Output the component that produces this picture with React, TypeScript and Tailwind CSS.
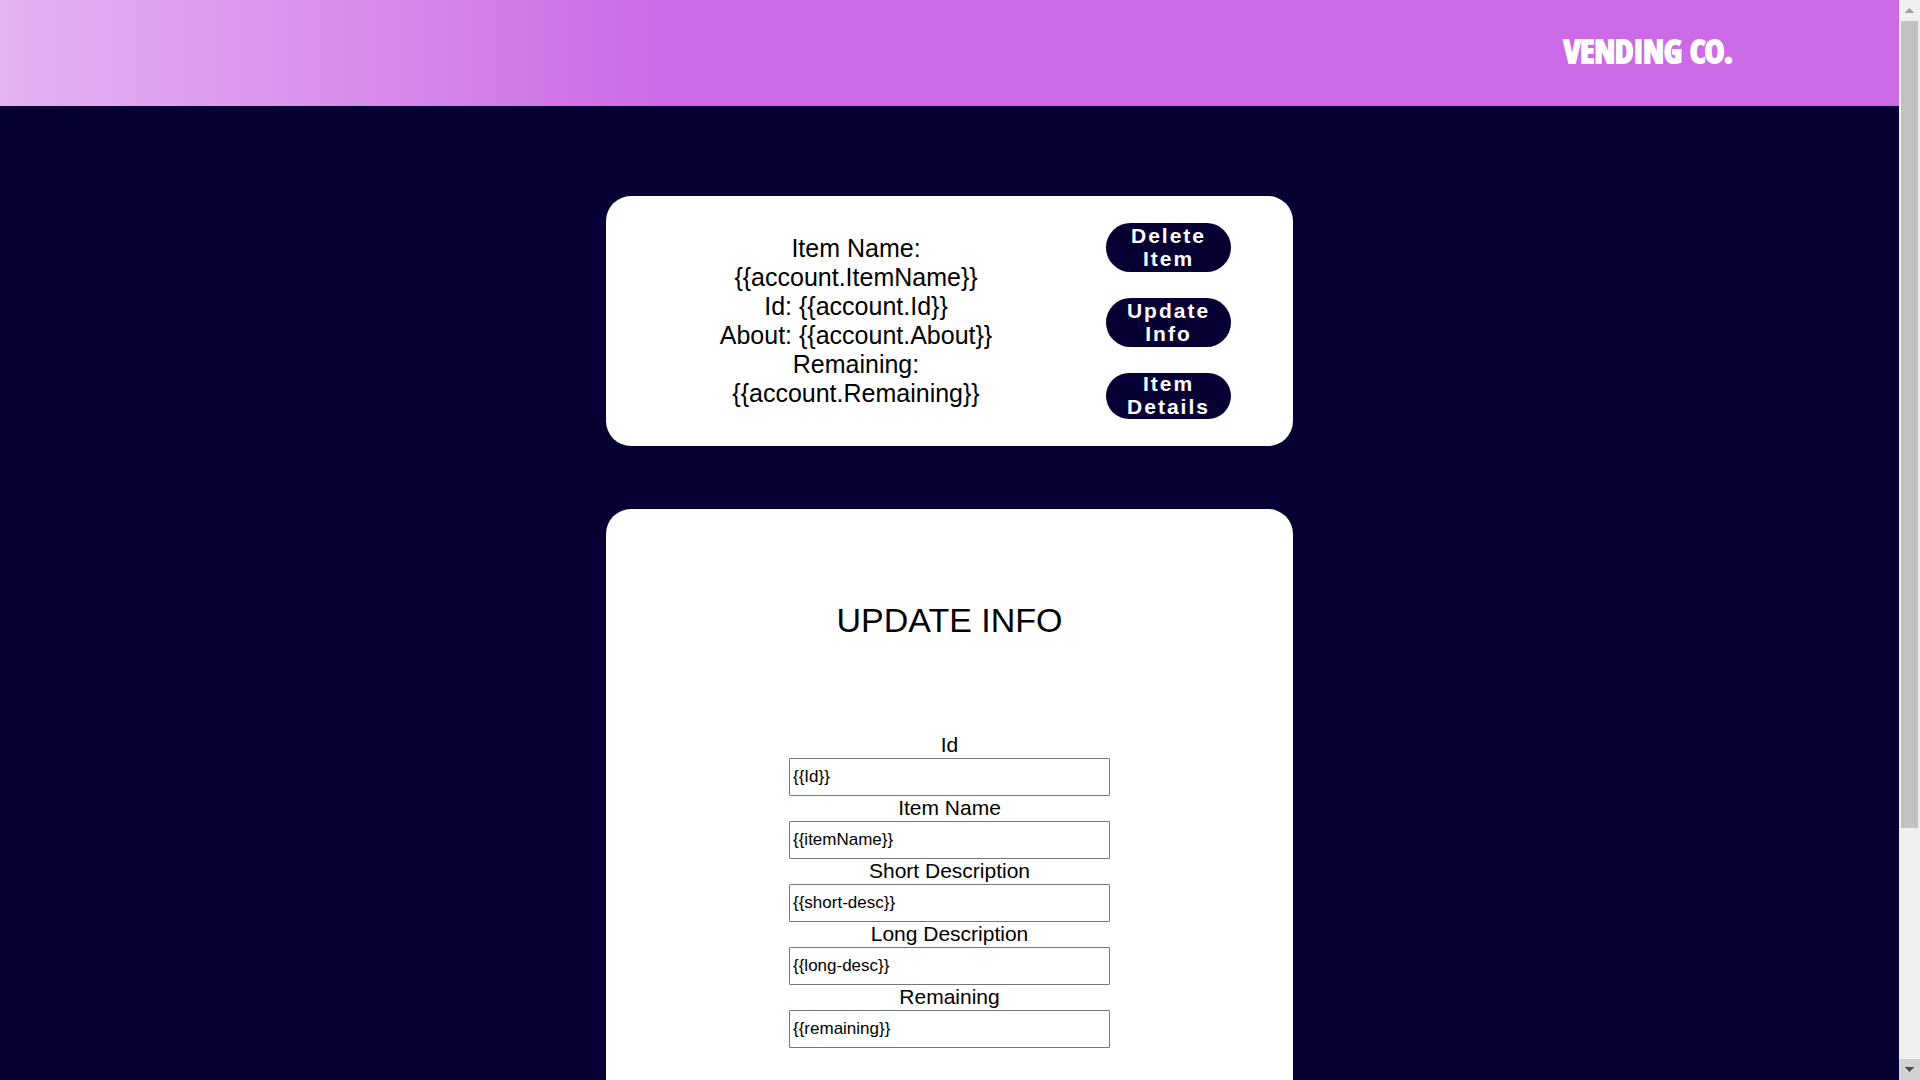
const fields = [
  { id: "id", label: "Id", value: "{{Id}}" },
  { id: "itemName", label: "Item Name", value: "{{itemName}}" },
  { id: "shortDesc", label: "Short Description", value: "{{short-desc}}" },
  { id: "longDesc", label: "Long Description", value: "{{long-desc}}" },
  { id: "remaining", label: "Remaining", value: "{{remaining}}" },
];

const actions = [
  { label: "Delete Item", height: "h-[49px]" },
  { label: "Update Info", height: "h-[49px]" },
  { label: "Item Details", height: "h-[46px]" },
];

function Header() {
  return (
    <header className="flex h-[106px] items-center justify-end bg-linear-to-r from-[#e5b2f2] to-[#cb69e6] to-35% pr-[166px] pb-1">
      <a
        href="#"
        className="font-['Open_Sans_Condensed','Roboto_Condensed',sans-serif] text-[33px] leading-[40px] font-black whitespace-nowrap text-white [-webkit-text-stroke:2px_white]"
      >
        VENDING CO.
      </a>
    </header>
  );
}

function ItemCard() {
  return (
    <section className="flex h-[250px] w-[687px] items-center justify-between rounded-[25px] bg-white pr-[62px] pl-[100px]">
      <div className="w-[300px] text-center text-[25px] leading-[29px]">
        <p>Item Name: {"{{account.ItemName}}"}</p>
        <p>Id: {"{{account.Id}}"}</p>
        <p>About: {"{{account.About}}"}</p>
        <p>Remaining: {"{{account.Remaining}}"}</p>
      </div>
      <div className="flex w-[125px] flex-col gap-[26px]">
        {actions.map((a) => (
          <button
            key={a.label}
            type="button"
            className={`${a.height} flex items-center justify-center rounded-[25px] bg-[#070033] px-4 pb-[2px] text-center text-[21px] leading-[23px] font-bold tracking-[2px] text-white`}
          >
            {a.label}
          </button>
        ))}
      </div>
    </section>
  );
}

function UpdateForm() {
  return (
    <section className="flex w-[687px] flex-col items-center rounded-[25px] bg-white py-[91px]">
      <h1 className="text-[34px] leading-[40px]">UPDATE INFO</h1>
      <form className="mt-[93px] flex w-[321px] flex-col">
        {fields.map((f) => (
          <div key={f.id} className="flex flex-col">
            <label htmlFor={f.id} className="mb-px text-center text-[21px] leading-[24px]">
              {f.label}
            </label>
            <input
              id={f.id}
              type="text"
              defaultValue={f.value}
              className="h-[38px] rounded-[1px] border border-[#767676] bg-white px-[3px] text-[17px]"
            />
          </div>
        ))}
      </form>
    </section>
  );
}

function Scrollbar() {
  return (
    <div aria-hidden="true" className="flex w-[21px] shrink-0 flex-col bg-[#f0f0f0]">
      <div className="flex h-[21px] items-center justify-center">
        <svg width="9" height="5" viewBox="0 0 9 5" shapeRendering="crispEdges">
          <path d="M4 0h1v1h1v1h1v1h1v1h1v1H0V4h1V3h1V2h1V1h1z" fill="#a3a3a3" />
        </svg>
      </div>
      <div className="flex flex-1 flex-col px-[2px]">
        <div className="flex-7 bg-[#c1c1c1]" />
        <div className="flex-2" />
      </div>
      <div className="flex h-[21px] items-center justify-center bg-[#d2d2d2]">
        <svg width="9" height="5" viewBox="0 0 9 5" shapeRendering="crispEdges">
          <path d="M0 0h9v1H8v1H7v1H6v1H5v1H4V4H3V3H2V2H1V1H0z" fill="#505050" />
        </svg>
      </div>
    </div>
  );
}

export default function App() {
  return (
    <div className="flex h-screen overflow-hidden bg-[#070033] font-['Liberation_Sans',Arial,sans-serif] text-black">
      <div className="min-w-0 flex-1 overflow-hidden">
        <Header />
        <main className="flex flex-col items-center gap-[63px] pt-[90px]">
          <ItemCard />
          <UpdateForm />
        </main>
      </div>
      <Scrollbar />
    </div>
  );
}
